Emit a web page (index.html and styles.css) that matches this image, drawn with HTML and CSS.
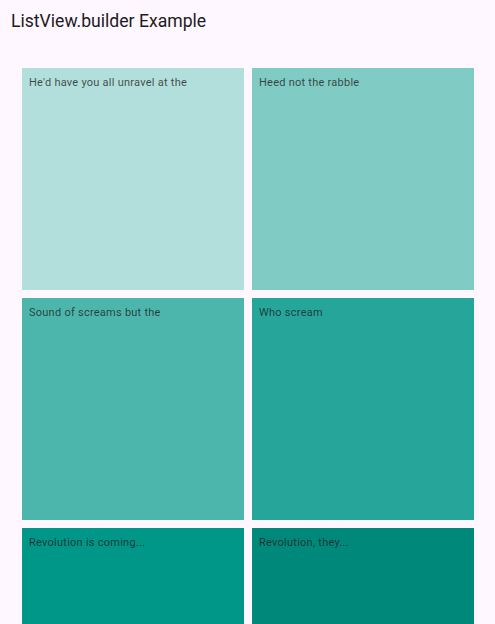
FILE: index.html
```html
<!DOCTYPE html>
<html>
<head>
<meta charset="utf-8">
<link rel="stylesheet" href="styles.css">
</head>
<body>
<header class="appbar"><h1 class="title">ListView.builder Example</h1></header>
<main class="grid">
  <div class="tile t100"><p class="label">He'd have you all unravel at the</p></div>
  <div class="tile t200"><p class="label">Heed not the rabble</p></div>
  <div class="tile t300"><p class="label">Sound of screams but the</p></div>
  <div class="tile t400"><p class="label">Who scream</p></div>
  <div class="tile t500"><p class="label">Revolution is coming...</p></div>
  <div class="tile t600"><p class="label">Revolution, they...</p></div>
</main>
</body>
</html>
```
FILE: styles.css
```css
html, body {
  margin: 0;
  padding: 0;
  background: #fef7ff;
  height: 624px;
  overflow: hidden;
  font-family: Roboto, "Noto Sans", sans-serif;
}
.appbar {
  height: 42px;
  display: flex;
  align-items: center;
  padding-left: 11px;
}
.title {
  margin: 0;
  font-size: 17.6px;
  font-weight: 400;
  color: #1d1b20;
}
.grid {
  display: grid;
  grid-template-columns: 222px 222px;
  grid-auto-rows: 222px;
  gap: 8px;
  padding: 26px 0 0 22px;
}
.tile {
  padding: 8px 7px;
}
.label {
  margin: 0;
  font-size: 11px;
  letter-spacing: 0.25px;
  color: rgba(29, 27, 32, 0.78);
}
.t100 { background: #b2dfdb; }
.t200 { background: #80cbc4; }
.t300 { background: #4db6ac; }
.t400 { background: #26a69a; }
.t500 { background: #009688; }
.t600 { background: #00897b; }
```
